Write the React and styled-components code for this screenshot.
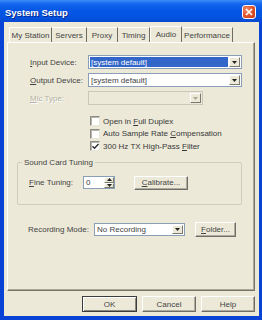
import React from "react";
import styled, { createGlobalStyle } from "styled-components";

const Global = createGlobalStyle`
  html, body { margin: 0; padding: 0; background: #fff; }
  body { font-family: "Liberation Sans", Arial, sans-serif; }
  * { box-sizing: border-box; }
`;

const Window = styled.div`
  width: 262px;
  height: 320px;
  display: flex;
  flex-direction: column;
  background: #0843d6;
  font-family: "Liberation Sans", Arial, sans-serif;
  font-size: 8px;
  color: #383838;
`;

const TitleBar = styled.div`
  height: 22px;
  flex: none;
  display: flex;
  align-items: center;
  justify-content: space-between;
  padding: 0 6px 0 5px;
  background: linear-gradient(180deg, #3d8ef7 0%, #1365ee 18%, #0657e6 45%, #0453e0 80%, #0648d2 100%);
`;

const Title = styled.span`
  color: #fff;
  font-weight: bold;
  font-size: 9.5px;
  text-shadow: 1px 1px 0 #0a2a8a;
  margin-top: 3px;
`;

const CloseBtn = styled.div`
  width: 14px;
  height: 14px;
  border: 1px solid #fff;
  border-radius: 3px;
  background: radial-gradient(circle at 30% 30%, #f08a6a 0%, #e0552e 50%, #c8391a 100%);
  display: flex;
  align-items: center;
  justify-content: center;
  margin-top: 2px;
`;

const Body = styled.div`
  flex: 1;
  margin: 0 3px 4px 4px;
  background: #ece9d8;
  padding: 3px 4px 0 3px;
  display: flex;
  flex-direction: column;
`;

const TabStrip = styled.div`
  height: 17px;
  display: flex;
  align-items: flex-end;
  padding-left: 2px;
`;

const Tab = styled.div`
  width: ${(p) => p.$w}px;
  height: ${(p) => (p.$active ? 17 : 15)}px;
  display: flex;
  align-items: center;
  justify-content: center;
  padding-bottom: ${(p) => (p.$active ? 2 : 0)}px;
  background: #ece9d8;
  border-top: 1px solid #fff;
  border-left: ${(p) => (p.$first || p.$active ? "1px solid #fff" : "none")};
  border-right: 1px solid #6f6d62;
  margin-bottom: ${(p) => (p.$active ? -1 : 0)}px;
  color: #444;
  white-space: nowrap;
`;

const Panel = styled.div`
  height: 249px;
  flex: none;
  background: #ece9d8;
  border-top: 1px solid #fff;
  border-left: 1px solid #fff;
  border-right: 1px solid #77756a;
  border-bottom: 1px solid #77756a;
  box-shadow: inset -1px -1px 0 #aca899;
  padding: 12px 0 0 9px;
  display: flex;
  flex-direction: column;
`;

const FieldGrid = styled.div`
  margin-left: 13px;
  display: grid;
  grid-template-columns: 58px auto;
  row-gap: 4px;
  align-items: center;
`;

const Label = styled.span`
  white-space: nowrap;
  color: ${(p) => (p.$disabled ? "#b5b2a4" : "#444")};
  text-shadow: ${(p) => (p.$disabled ? "1px 1px 0 #fff" : "none")};
  width: ${(p) => (p.$w ? p.$w + "px" : "auto")};
  flex: none;
`;

const U = styled.span`
  text-decoration: underline;
`;

const Combo = styled.div`
  width: ${(p) => p.$w}px;
  height: ${(p) => p.$h || 14}px;
  border: 1px solid ${(p) => (p.$disabled ? "#c9c7ba" : "#8a9fb5")};
  background: ${(p) => (p.$disabled ? "#ece9d8" : "#fff")};
  display: flex;
  align-items: stretch;
  padding: 1px;
`;

const ComboText = styled.div`
  flex: 1;
  display: flex;
  align-items: center;
  padding-left: 1px;
  background: ${(p) => (p.$sel ? "#3266c8" : "transparent")};
  color: ${(p) => (p.$sel ? "#fff" : "#444")};
  white-space: nowrap;
  overflow: hidden;
`;

const DropBtn = styled.div`
  width: 11px;
  flex: none;
  margin-left: 1px;
  background: #ece9d8;
  border-top: 1px solid #fff;
  border-left: 1px solid #fff;
  border-right: 1px solid #7a7a70;
  border-bottom: 1px solid #7a7a70;
  display: flex;
  align-items: center;
  justify-content: center;
`;

const Arrow = ({ color = "#222", up = false }) => (
  <svg width="5" height="3" viewBox="0 0 5 3" style={{ transform: up ? "rotate(180deg)" : "none" }}>
    <path d="M0 0H5L2.5 3Z" fill={color} />
  </svg>
);

const Checks = styled.div`
  margin-top: 10px;
  margin-left: 73px;
  display: flex;
  flex-direction: column;
`;

const CheckRow = styled.div`
  height: 12.5px;
  display: flex;
  align-items: center;
  gap: 3px;
  white-space: nowrap;
`;

const Box = styled.div`
  width: 10px;
  height: 10px;
  flex: none;
  background: #fff;
  border-top: 1px solid #8c8c84;
  border-left: 1px solid #8c8c84;
  border-right: 1px solid #e8e6dc;
  border-bottom: 1px solid #e8e6dc;
  box-shadow: inset 1px 1px 0 #b8b6ac;
  display: flex;
  align-items: center;
  justify-content: center;
`;

const Group = styled.fieldset`
  margin: 5px 0 0 0;
  width: 225px;
  border: 1px solid #cfcdbd;
  border-radius: 2px;
  padding: 0 0 14px 4px;
  min-width: 0;
`;

const Legend = styled.legend`
  padding: 0 2px;
  font-size: 8px;
  line-height: 10px;
  color: #444;
`;

const Row = styled.div`
  display: flex;
  align-items: center;
  margin-left: ${(p) => p.$ml || 0}px;
  margin-top: ${(p) => p.$mt || 0}px;
`;

const Spinner = styled.div`
  width: 32px;
  height: 13px;
  border: 1px solid #8a9fb5;
  background: #fff;
  display: flex;
  padding: 0 0 0 2px;
`;

const SpinText = styled.div`
  flex: 1;
  display: flex;
  align-items: center;
`;

const SpinBtns = styled.div`
  width: 10px;
  display: flex;
  flex-direction: column;
`;

const SpinBtn = styled.div`
  flex: 1;
  background: #ece9d8;
  border-top: 1px solid #fff;
  border-left: 1px solid #fff;
  border-right: 1px solid #7a7a70;
  border-bottom: 1px solid #7a7a70;
  display: flex;
  align-items: center;
  justify-content: center;
`;

const Button = styled.div`
  width: ${(p) => p.$w}px;
  height: ${(p) => p.$h || 16}px;
  flex: none;
  margin-left: ${(p) => p.$ml || 0}px;
  display: flex;
  align-items: center;
  justify-content: center;
  background: #ece9d8;
  border-top: 1px solid ${(p) => (p.$default ? "#3c3c3c" : "#fff")};
  border-left: 1px solid ${(p) => (p.$default ? "#3c3c3c" : "#fff")};
  border-right: 1px solid ${(p) => (p.$default ? "#3c3c3c" : "#6e6d66")};
  border-bottom: 1px solid ${(p) => (p.$default ? "#3c3c3c" : "#6e6d66")};
  box-shadow: ${(p) =>
    p.$default
      ? "inset 1px 1px 0 #fff, inset -1px -1px 0 #8a887c"
      : "inset -1px -1px 0 #aeac9f"};
  color: #444;
  white-space: nowrap;
`;

const ButtonRow = styled.div`
  margin-top: 5px;
  display: flex;
  justify-content: flex-end;
  gap: 5px;
`;

const tabs = [
  { t: "My Station", w: 43 },
  { t: "Servers", w: 35 },
  { t: "Proxy", w: 31 },
  { t: "Timing", w: 32 },
  { t: "Audio", w: 32, active: true },
  { t: "Performance", w: 51 },
];

const Check = () => (
  <svg width="7" height="7" viewBox="0 0 7 7">
    <path d="M0.5 3.2L2.5 5.2L6.5 1" stroke="#2a2a2a" strokeWidth="1.4" fill="none" />
  </svg>
);

export default function App() {
  return (
    <>
      <Global />
      <Window>
        <TitleBar>
          <Title>System Setup</Title>
          <CloseBtn>
            <svg width="8" height="8" viewBox="0 0 8 8">
              <path d="M1 1L7 7M7 1L1 7" stroke="#fff" strokeWidth="1.6" />
            </svg>
          </CloseBtn>
        </TitleBar>
        <Body>
          <TabStrip>
            {tabs.map((t, i) => (
              <Tab key={t.t} $w={t.w} $active={t.active} $first={i === 0}>
                {t.t}
              </Tab>
            ))}
          </TabStrip>
          <Panel>
            <FieldGrid>
              <Label><U>I</U>nput Device:</Label>
              <Combo $w={154}>
                <ComboText $sel>[system default]</ComboText>
                <DropBtn><Arrow /></DropBtn>
              </Combo>
              <Label><U>O</U>utput Device:</Label>
              <Combo $w={154}>
                <ComboText>[system default]</ComboText>
                <DropBtn><Arrow /></DropBtn>
              </Combo>
              <Label $disabled><U>M</U>ic Type:</Label>
              <Combo $w={115} $disabled>
                <ComboText />
                <DropBtn><Arrow color="#aca899" /></DropBtn>
              </Combo>
            </FieldGrid>
            <Checks>
              <CheckRow><Box /><span>Open in <U>F</U>ull Duplex</span></CheckRow>
              <CheckRow><Box /><span>Auto Sample Rate <U>C</U>ompensation</span></CheckRow>
              <CheckRow><Box><Check /></Box><span>300 Hz TX High-Pass <U>F</U>ilter</span></CheckRow>
            </Checks>
            <Group>
              <Legend>Sound Card Tuning</Legend>
              <Row $ml={7} $mt={8}>
                <Label $w={54}><U>F</U>ine Tuning:</Label>
                <Spinner>
                  <SpinText>0</SpinText>
                  <SpinBtns>
                    <SpinBtn><Arrow up /></SpinBtn>
                    <SpinBtn><Arrow /></SpinBtn>
                  </SpinBtns>
                </Spinner>
                <Button $w={54} $h={14} $ml={19}><span><U>C</U>alibrate...</span></Button>
              </Row>
            </Group>
            <Row $ml={11} $mt={17}>
              <Label $w={66}>Recording Mode:</Label>
              <Combo $w={91} $h={13}>
                <ComboText>No Recording</ComboText>
                <DropBtn><Arrow /></DropBtn>
              </Combo>
              <Button $w={41} $h={15} $ml={10}><span><U>F</U>older...</span></Button>
            </Row>
          </Panel>
          <ButtonRow>
            <Button $w={55} $default>OK</Button>
            <Button $w={54}>Cancel</Button>
            <Button $w={54}>Help</Button>
          </ButtonRow>
        </Body>
      </Window>
    </>
  );
}
